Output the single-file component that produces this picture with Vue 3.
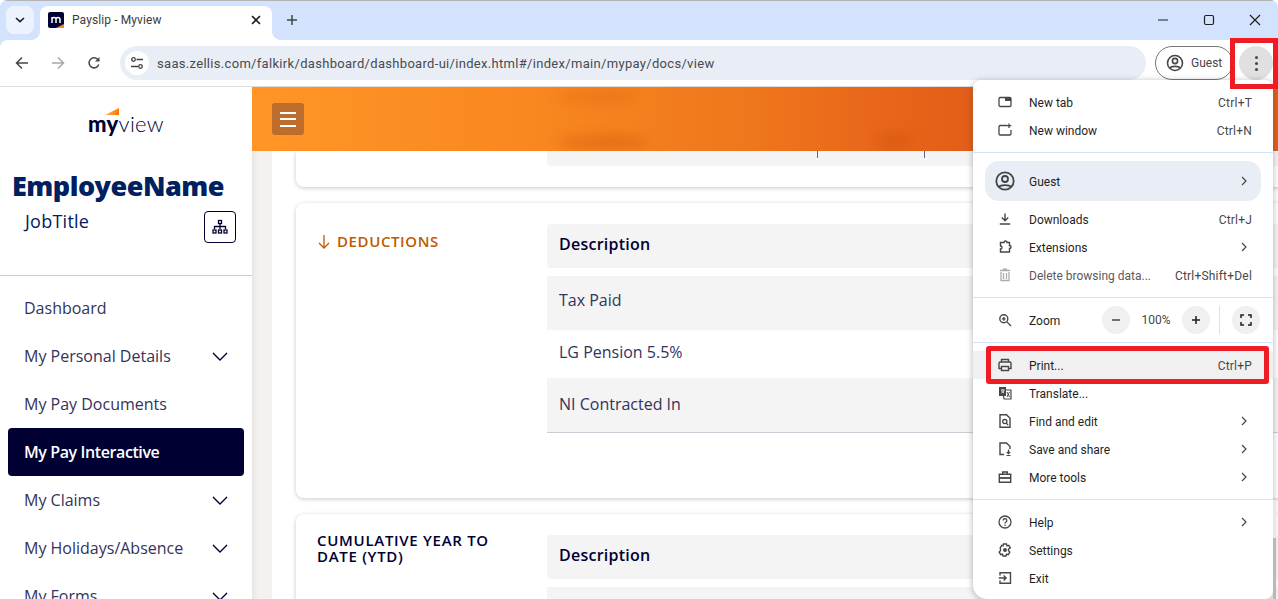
<script setup>
const nav = [
  { label: 'Dashboard' },
  { label: 'My Personal Details', more: true },
  { label: 'My Pay Documents' },
  { label: 'My Pay Interactive', active: true },
  { label: 'My Claims', more: true },
  { label: 'My Holidays/Absence', more: true },
  { label: 'My Forms', more: true }
]
const icons = {
  tab: '<rect x="2" y="3.500" width="12" height="9" rx="1.200" fill="none" stroke-width="1.300"/><path d="M8 4h6v3H8z" fill="#474747" stroke="none"/>',
  win: '<path d="M10 3.500H3.200A1.200 1.200 0 0 0 2 4.700v7.100A1.200 1.200 0 0 0 3.200 13h9.600a1.200 1.200 0 0 0 1.200-1.200V8" fill="none" stroke-width="1.300"/><path d="M12 1.500v4.500M9.800 3.700h4.500" fill="none" stroke-width="1.300"/>',
  down: '<path d="M8 2.500v7M4.800 6.600 8 9.800l3.200-3.200M2.800 13h10.400" fill="none" stroke-width="1.400"/>',
  ext: '<path d="M5 3.500h2a1.500 1.500 0 0 1 3 0h2.500v3a1.500 1.500 0 0 1 0 3v3.500H3.500V10a1.500 1.500 0 0 0 0-3V3.500z" fill="none" stroke-width="1.400"/>',
  trash: '<path d="M4 5v8.500h8V5M3 3.500h10M6 2.200h4M6.500 6v6M9.500 6v6" fill="none" stroke-width="1.300"/>',
  zoom: '<circle cx="6.800" cy="6.800" r="4" fill="none" stroke-width="1.400"/><path d="m10 10 4 4M4.900 6.800h3.800M6.800 4.900v3.800" fill="none" stroke-width="1.300"/>',
  print: '<path d="M4.500 5V2.500h7V5M4.500 11.500H2V6.300A1.300 1.300 0 0 1 3.300 5h9.400A1.300 1.300 0 0 1 14 6.300v5.200h-2.500" fill="none" stroke-width="1.400"/><path d="M4.500 9.500h7v4h-7z" fill="none" stroke-width="1.400"/>',
  trans: '<path d="M2 2h7v9H2z" fill="#474747" stroke="none"/><path d="M9 5h5v9H7l-.5-3" fill="none" stroke-width="1.200"/><path d="M4 5h3.500M5.700 4v1M4.500 8c1.500-.5 2.300-1.500 2.600-3M4.500 5.500c.4 1.200 1.300 2 2.500 2.400" fill="none" stroke="#fff" stroke-width=".8"/><path d="m10 7 2.500 5M12.500 7 10 12" fill="none" stroke-width="1"/>',
  find: '<path d="M3 1.800h6.500L13 5.300v9H3z" fill="none" stroke-width="1.400"/><circle cx="7.800" cy="8.600" r="2.100" fill="none" stroke-width="1.300"/><path d="m9.300 10.200 1.800 1.800" fill="none" stroke-width="1.300"/>',
  save: '<path d="M7 13.500H3V2h6.500L13 5.500V8" fill="none" stroke-width="1.400"/><path d="M11.500 8.500v4M9.800 11l1.700 1.700 1.700-1.700M9.500 14.500h4" fill="none" stroke-width="1.200"/>',
  tools: '<path d="M2.300 5.300h11.400v8H2.300zM5.700 5V3h4.600v2" fill="none" stroke-width="1.400"/><path d="M2.300 9h11.400" fill="none" stroke-width="1.800"/>',
  help: '<circle cx="8" cy="8" r="6" fill="none" stroke-width="1.300"/><path d="M6.200 6.400a1.800 1.800 0 1 1 2.700 1.600c-.6.400-.9.700-.9 1.400" fill="none" stroke-width="1.300"/><circle cx="8" cy="11.300" r=".8" fill="#474747" stroke="none"/>',
  gear: '<path d="m6.500 2 3 0 .5 1.800 1.800-.5 1.500 2.600L11.500 7.200v1.600l1.300 1.300-1.500 2.600-1.800-.5-.5 1.800h-3l-.5-1.800-1.800.5-1.500-2.600 1.300-1.300V7.200L3.200 5.900l1.500-2.600 1.300.5z" fill="none" stroke-width="1.400"/><circle cx="8" cy="8" r="2" fill="#474747" stroke="none"/>',
  exit: '<path d="M3 5.500V2.800h10.500v10.400H3v-2.700" fill="none" stroke-width="1.400"/><path d="M1.800 8h7.200M6.600 5.500 9.100 8l-2.500 2.500" fill="none" stroke-width="1.400"/>'
}
const groupA = [
  { label: 'New tab', key: 'Ctrl+T', icon: 'tab' },
  { label: 'New window', key: 'Ctrl+N', icon: 'win' }
]
const groupB = [
  { label: 'Downloads', key: 'Ctrl+J', icon: 'down' },
  { label: 'Extensions', arrow: true, icon: 'ext' },
  { label: 'Delete browsing data...', key: 'Ctrl+Shift+Del', icon: 'trash', dim: true }
]
const groupC = [
  { label: 'Print...', key: 'Ctrl+P', icon: 'print', hover: true },
  { label: 'Translate...', icon: 'trans' },
  { label: 'Find and edit', arrow: true, icon: 'find' },
  { label: 'Save and share', arrow: true, icon: 'save' },
  { label: 'More tools', arrow: true, icon: 'tools' }
]
const groupD = [
  { label: 'Help', arrow: true, icon: 'help' },
  { label: 'Settings', icon: 'gear' },
  { label: 'Exit', icon: 'exit' }
]
const groups = { groupA, groupB, groupC, groupD }
const rows = ['Tax Paid', 'LG Pension 5.5%', 'NI Contracted In']
</script>

<template>
  <div class="page">
    <div class="strip">
      <div class="tabsearch">
        <svg width="10" height="6" viewBox="0 0 10 6"><path d="m1 1 4 3.600L9 1" fill="none" stroke="#1f1f1f" stroke-width="1.600"/></svg>
      </div>
      <div class="tab">
        <span class="favicon">
          <svg width="16" height="16" viewBox="0 0 16 16">
            <rect width="16" height="16" rx="2" fill="#000033"/>
            <path d="M16 12v2a2 2 0 0 1-2 2H8z" fill="#ff8a1e"/>
            <path d="M4 11V5M4 7.200c0-2.400 4-2.400 4 0V11M8 7.200c0-2.400 4-2.400 4 0V11" fill="none" stroke="#fff" stroke-width="1.500"/>
          </svg>
        </span>
        <span class="tabtitle">Payslip - Myview</span>
        <svg class="tabclose" width="10" height="10" viewBox="0 0 10 10"><path d="m1 1 8 8M9 1 1 9" stroke="#1f1f1f" stroke-width="1.600"/></svg>
      </div>
      <svg class="newtab" width="12" height="12" viewBox="0 0 12 12"><path d="M6 1v10M1 6h10" stroke="#444" stroke-width="1.500"/></svg>
      <div class="winctl">
        <svg width="12" height="12" viewBox="0 0 12 12"><path d="M1 6h10" stroke="#1f1f1f" stroke-width="1.200"/></svg>
        <svg width="12" height="12" viewBox="0 0 12 12"><rect x="1.500" y="1.500" width="9" height="9" rx="1.500" fill="none" stroke="#1f1f1f" stroke-width="1.200"/></svg>
        <svg width="12" height="12" viewBox="0 0 12 12"><path d="m1 1 10 10M11 1 1 11" stroke="#1f1f1f" stroke-width="1.200"/></svg>
      </div>
    </div>

    <div class="toolbar">
      <div class="navbtns">
        <svg width="14" height="14" viewBox="0 0 14 14"><path d="M13 7H2M7 1.500 1.500 7 7 12.500" fill="none" stroke="#474747" stroke-width="1.500"/></svg>
        <svg width="14" height="14" viewBox="0 0 14 14"><path d="M1 7h11M7 1.500 12.500 7 7 12.500" fill="none" stroke="#a8a8a8" stroke-width="1.500"/></svg>
        <svg width="14" height="14" viewBox="0 0 14 14"><path d="M11.800 8.500A5 5 0 1 1 10.600 3.300L12 4.700" fill="none" stroke="#474747" stroke-width="1.500"/><path d="M12.500 1v4.500H8z" fill="#474747"/></svg>
      </div>
      <div class="omni">
        <span class="siteinfo">
          <svg width="14" height="14" viewBox="0 0 14 14" fill="none" stroke="#444" stroke-width="1.300"><circle cx="3.500" cy="3.500" r="1.800"/><path d="M6.500 3.500H13M1 10.500h7"/><circle cx="10.500" cy="10.500" r="1.800"/></svg>
        </span>
        <span class="url">saas.zellis.com/falkirk/dashboard/dashboard-ui/index.html#/index/main/mypay/docs/view</span>
      </div>
      <div class="guest">
        <svg width="18" height="18" viewBox="0 0 18 18" fill="none" stroke="#474747" stroke-width="1.600"><circle cx="9" cy="9" r="7.500"/><circle cx="9" cy="7" r="2.600"/><path d="M3.800 14c1.500-2.200 8.900-2.200 10.400 0"/></svg>
        <span>Guest</span>
      </div>
      <div class="kebab"><i></i><i></i><i></i></div>
    </div>

    <div class="body">
      <aside class="side">
        <div class="logo">
          <span class="logomark"></span>
          <span class="logotext"><b>my</b>view</span>
        </div>
        <div class="who">
          <div class="empname">EmployeeName</div>
          <div class="jobrow">
            <span class="jobtitle">JobTitle</span>
            <span class="orgbtn">
              <svg width="16" height="16" viewBox="0 0 16 16" fill="none" stroke="#000033" stroke-width="1.300"><rect x="6.500" y="1.500" width="3" height="3"/><path d="M8 4.500v3M2.500 10V7.500h11V10M8 7.500V10"/><rect x="1" y="11" width="3" height="3"/><rect x="6.500" y="11" width="3" height="3"/><rect x="12" y="11" width="3" height="3"/></svg>
            </span>
          </div>
        </div>
        <nav class="nav">
          <div v-for="n in nav" :key="n.label" class="navitem" :class="{ active: n.active }">
            <span>{{ n.label }}</span>
            <svg v-if="n.more" width="16" height="9" viewBox="0 0 16 9"><path d="m1 1 7 7 7-7" fill="none" stroke="#000033" stroke-width="1.400"/></svg>
          </div>
        </nav>
      </aside>

      <main class="main">
        <header class="topbar">
          <span class="burger"><i></i><i></i><i></i></span>
          <span class="blur b1"></span>
          <span class="blur b2"></span>
          <span class="blur b3"></span>
        </header>
        <div class="scroll">
          <section class="card first">
            <div class="partial">
              <span class="tick t1"></span>
              <span class="tick t2"></span>
            </div>
          </section>
          <section class="card second">
            <h3 class="deduct">
              <svg width="14" height="15" viewBox="0 0 14 15"><path d="M7 1v13M2 9l5 5 5-5" fill="none" stroke="#bf5a00" stroke-width="1.300"/></svg>
              DEDUCTIONS
            </h3>
            <div class="table">
              <div class="thead">Description</div>
              <div class="tbody">
                <div v-for="r in rows" :key="r" class="trow">{{ r }}</div>
              </div>
            </div>
          </section>
          <section class="card third">
            <h3 class="ytd">CUMULATIVE YEAR TO DATE (YTD)</h3>
            <div class="table">
              <div class="thead">Description</div>
              <div class="tbody"><div class="trow"></div></div>
            </div>
          </section>
        </div>
      </main>
    </div>

    <div class="menu">
      <div class="mgroup">
        <div v-for="m in groups.groupA" :key="m.label" class="mitem">
          <svg class="micon" width="16" height="16" viewBox="0 0 16 16" stroke="#474747" v-html="icons[m.icon]"></svg>
          <span class="mlabel">{{ m.label }}</span>
          <span class="mkey">{{ m.key }}</span>
        </div>
      </div>
      <div class="mgroup withpill">
        <div class="pill">
          <svg width="20" height="20" viewBox="0 0 20 20" fill="none" stroke="#444" stroke-width="1.800"><circle cx="10" cy="10" r="8.700"/><circle cx="10" cy="8" r="3"/><path d="M4 16c1.700-2.600 10.300-2.600 12 0"/></svg>
          <span class="mlabel">Guest</span>
          <svg class="marrow" width="6" height="10" viewBox="0 0 6 10"><path d="m1 1 4 4-4 4" fill="none" stroke="#474747" stroke-width="1.200"/></svg>
        </div>
        <div v-for="m in groups.groupB" :key="m.label" class="mitem" :class="{ dim: m.dim }">
          <svg class="micon" width="16" height="16" viewBox="0 0 16 16" stroke="#474747" v-html="icons[m.icon]"></svg>
          <span class="mlabel">{{ m.label }}</span>
          <span v-if="m.key" class="mkey">{{ m.key }}</span>
          <svg v-if="m.arrow" class="marrow" width="6" height="10" viewBox="0 0 6 10"><path d="m1 1 4 4-4 4" fill="none" stroke="#474747" stroke-width="1.200"/></svg>
        </div>
      </div>
      <div class="mgroup zoomrow">
        <svg class="micon" width="16" height="16" viewBox="0 0 16 16" stroke="#474747" v-html="icons.zoom"></svg>
        <span class="mlabel">Zoom</span>
        <span class="zbtn"><svg width="10" height="10" viewBox="0 0 10 10"><path d="M1 5h8" stroke="#474747" stroke-width="1.500"/></svg></span>
        <span class="zval">100%</span>
        <span class="zbtn"><svg width="10" height="10" viewBox="0 0 10 10"><path d="M1 5h8M5 1v8" stroke="#1f1f1f" stroke-width="1.500"/></svg></span>
        <span class="zsep"></span>
        <span class="zbtn"><svg width="12" height="12" viewBox="0 0 12 12"><path d="M1 4V1h3M8 1h3v3M11 8v3H8M4 11H1V8" fill="none" stroke="#1f1f1f" stroke-width="1.500"/></svg></span>
      </div>
      <div class="mgroup print">
        <div v-for="m in groups.groupC" :key="m.label" class="mitem" :class="{ hover: m.hover }">
          <svg class="micon" width="16" height="16" viewBox="0 0 16 16" stroke="#474747" v-html="icons[m.icon]"></svg>
          <span class="mlabel">{{ m.label }}</span>
          <span v-if="m.key" class="mkey">{{ m.key }}</span>
          <svg v-if="m.arrow" class="marrow" width="6" height="10" viewBox="0 0 6 10"><path d="m1 1 4 4-4 4" fill="none" stroke="#474747" stroke-width="1.200"/></svg>
        </div>
      </div>
      <div class="mgroup last">
        <div v-for="m in groups.groupD" :key="m.label" class="mitem">
          <svg class="micon" width="16" height="16" viewBox="0 0 16 16" stroke="#474747" v-html="icons[m.icon]"></svg>
          <span class="mlabel">{{ m.label }}</span>
          <svg v-if="m.arrow" class="marrow" width="6" height="10" viewBox="0 0 6 10"><path d="m1 1 4 4-4 4" fill="none" stroke="#474747" stroke-width="1.200"/></svg>
        </div>
      </div>
    </div>

    <div class="scrolltrack"><span></span></div>
    <div class="redbox kebabbox"></div>
    <div class="redbox printbox"></div>
  </div>
</template>

<style>
html, body { margin: 0; overflow: hidden; background: #fff; }
</style>

<style scoped>
.page {
  position: relative;
  width: 1278px;
  height: 599px;
  overflow: hidden;
  display: flex;
  flex-direction: column;
  font-family: "Open Sans", "Noto Sans", sans-serif;
  background: #d3e3fd;
  border-radius: 8px 8px 0 0;
}
.strip {
  height: 39px;
  flex: none;
  display: flex;
  align-items: flex-end;
  background: #d3e3fd;
  border-top: 1px solid #b4b4b4;
  padding-left: 6px;
  font-family: Roboto, sans-serif;
}
.tabsearch {
  width: 28px;
  height: 28px;
  margin-bottom: 6px;
  border-radius: 8px;
  background: #edf3fe;
  display: flex;
  align-items: center;
  justify-content: center;
}
.tab {
  position: relative;
  width: 232px;
  height: 34px;
  margin-left: 6px;
  box-sizing: border-box;
  padding: 0 11px 6px 8px;
  display: flex;
  align-items: center;
  background: #fff;
  border-radius: 8px 8px 0 0;
}
.tab::before,
.tab::after {
  content: "";
  position: absolute;
  bottom: 0;
  width: 8px;
  height: 8px;
}
.tab::before { left: -8px; background: radial-gradient(circle at 0 0, transparent 7.500px, #fff 8px); }
.tab::after { right: -8px; background: radial-gradient(circle at 100% 0, transparent 7.500px, #fff 8px); }
.favicon { width: 16px; height: 16px; display: block; line-height: 0; }
.tabtitle { margin-left: 8px; font-size: 12px; color: #3c3c3c; flex: 1; letter-spacing: .1px; }
.newtab { margin: 0 0 14px 14px; }
.winctl {
  margin-left: auto;
  margin-bottom: 14px;
  display: flex;
  gap: 34px;
  padding-right: 17px;
}
.toolbar {
  height: 46px;
  flex: none;
  display: flex;
  align-items: center;
  background: #fff;
  border-bottom: 1px solid #dcdcdc;
  border-radius: 8px 8px 0 0;
  padding: 0 5px 0 15px;
  font-family: Roboto, sans-serif;
}
.navbtns { display: flex; gap: 22px; width: 105px; flex: none; }
.omni {
  width: 1026px;
  height: 34px;
  flex: none;
  border-radius: 17px;
  background: #e9eef6;
  display: flex;
  align-items: center;
  padding-left: 5px;
  box-sizing: border-box;
}
.siteinfo {
  width: 24px;
  height: 24px;
  border-radius: 50%;
  background: #fff;
  display: flex;
  align-items: center;
  justify-content: center;
}
.url { margin-left: 8px; font-size: 13px; color: #474a4f; white-space: nowrap; letter-spacing: .31px; }
.guest {
  margin-left: 9px;
  width: 78px;
  height: 34px;
  flex: none;
  box-sizing: border-box;
  border: 1px solid #747775;
  border-radius: 17px;
  display: flex;
  align-items: center;
  gap: 7px;
  padding-left: 10px;
  font-size: 12px;
  color: #474747;
}
.kebab {
  margin-left: 6px;
  width: 34px;
  height: 34px;
  flex: none;
  border-radius: 50%;
  background: #e0e0e0;
  display: flex;
  flex-direction: column;
  align-items: center;
  justify-content: center;
  gap: 3px;
}
.kebab i { width: 3px; height: 3px; border-radius: 50%; background: #474747; display: block; }
.body { flex: 1; display: flex; min-height: 0; }
.side { width: 252px; flex: none; background: #fff; overflow: hidden; }
.logo {
  position: relative;
  height: 85px;
  display: flex;
  justify-content: center;
  align-items: flex-start;
  padding-top: 23px;
  box-sizing: border-box;
}
.logomark {
  position: absolute;
  left: 105px;
  top: 21px;
  width: 14px;
  height: 7px;
  background: linear-gradient(90deg, #ffb060, #ff7a00);
  clip-path: polygon(0 100%, 100% 0, 100% 100%);
}
.logotext {
  font-family: Lato, sans-serif;
  font-size: 22px;
  line-height: 28px;
  font-weight: 300;
  color: #000033;
  letter-spacing: .3px;
}
.logotext b { font-weight: 900; }
.who { height: 103px; border-bottom: 1px solid #ccccd6; padding-left: 12px; }
.empname {
  font-size: 27px;
  font-weight: 800;
  line-height: 28px;
  color: #002060;
  letter-spacing: -.5px;
  font-family: "Open Sans", sans-serif;
}
.jobrow { display: flex; justify-content: space-between; align-items: flex-start; padding: 9px 16px 0 13px; }
.jobtitle { font-size: 18px; line-height: 24px; color: #002060; letter-spacing: .25px; }
.orgbtn {
  width: 32px;
  height: 32px;
  box-sizing: border-box;
  border: 1px solid #000033;
  border-radius: 4px;
  display: flex;
  align-items: center;
  justify-content: center;
  margin-top: 2px;
}
.nav { padding: 8px 8px 0; }
.navitem {
  height: 48px;
  display: flex;
  align-items: center;
  justify-content: space-between;
  padding: 0 16px;
  font-size: 16px;
  color: #33335c;
  border-radius: 4px;
}
.navitem.active { background: #000033; color: #fff; font-weight: 600; letter-spacing: -.4px; }
.main {
  flex: 1;
  min-width: 0;
  position: relative;
  background: linear-gradient(90deg, #e8e5e2, #f4f2f0 6px);
  display: flex;
  flex-direction: column;
}
.topbar {
  position: relative;
  height: 64px;
  flex: none;
  background: linear-gradient(90deg, #ff9627 0%, #f8871f 28%, #ee751c 50%, #e8651a 62%, #e25e18 70%, #e25e18 100%);
  overflow: hidden;
}
.burger {
  position: absolute;
  left: 20px;
  top: 16px;
  width: 32px;
  height: 32px;
  border-radius: 3px;
  background: #bd6c2b;
  display: flex;
  flex-direction: column;
  align-items: center;
  justify-content: center;
  gap: 4.500px;
}
.burger i { width: 16px; height: 2px; background: #fff; display: block; }
.blur { position: absolute; border-radius: 50%; background: rgba(200, 80, 10, .35); filter: blur(6px); }
.b1 { left: 306px; top: 48px; width: 90px; height: 14px; }
.b2 { left: 623px; top: 46px; width: 40px; height: 16px; }
.b3 { left: 306px; top: 3px; width: 80px; height: 14px; background: rgba(200, 80, 10, .18); }
.scroll {
  flex: 1;
  min-height: 0;
  margin-left: 20px;
  padding: 0 24px;
  background: #fff;
  overflow: hidden;
  display: flex;
  flex-direction: column;
  gap: 16px;
}
.card {
  flex: none;
  background: #fff;
  border-radius: 8px;
  box-shadow: 0 1px 4px rgba(0, 0, 51, .22);
  box-sizing: border-box;
  display: flex;
  padding-left: 21px;
  width: 1000px;
}
.card.first { height: 36px; border-radius: 0 0 8px 8px; padding-left: 251px; }
.partial {
  position: relative;
  width: 800px;
  height: 15px;
  background: #f4f4f4;
  border-radius: 0 0 4px 4px;
}
.tick { position: absolute; top: 0; width: 1px; height: 7px; background: #66668a; }
.t1 { left: 270px; }
.t2 { left: 377px; }
.card.second { height: 295px; padding-top: 21px; }
.card.third { height: 200px; padding-top: 21px; }
.deduct {
  width: 230px;
  flex: none;
  margin: 7px 0 0;
  display: flex;
  align-items: center;
  gap: 6px;
  height: 20px;
  font-size: 15px;
  font-weight: 600;
  letter-spacing: .6px;
  color: #bf5a00;
  font-family: "Open Sans", sans-serif;
}
.ytd {
  width: 190px;
  margin: -3px 40px 0 0;
  flex: none;
  font-size: 15px;
  line-height: 16px;
  font-weight: 600;
  letter-spacing: .7px;
  color: #000033;
  font-family: "Open Sans", sans-serif;
}
.table { width: 800px; flex: none; }
.thead {
  height: 44px;
  box-sizing: border-box;
  display: flex;
  align-items: center;
  padding: 0 0 5px 12px;
  background: #f4f4f4;
  border-radius: 4px;
  font-size: 16px;
  font-weight: 600;
  letter-spacing: .25px;
  color: #000033;
}
.tbody { margin-top: 8px; border-bottom: 1px solid #ccccd6; }
.third .tbody { border-bottom: 0; }
.trow {
  box-sizing: border-box;
  padding: 0 12px 4px;
  display: flex;
  align-items: center;
  height: 48px;
  font-size: 16px;
  color: #33335c;
}
.trow:nth-child(odd) { background: #f4f4f4; height: 54px; padding-bottom: 6px; }
.trow:nth-child(3) { padding-bottom: 2px; }
.third .trow { height: 60px; }
.menu {
  position: absolute;
  left: 973px;
  top: 80px;
  width: 300px;
  height: 519px;
  background: #fff;
  border-radius: 8px 8px 8px 14px;
  box-shadow: 0 1px 6px rgba(60, 64, 67, .4);
  font-family: Roboto, sans-serif;
  font-size: 12px;
  color: #1f1f1f;
  box-sizing: border-box;
  padding-top: 8px;
}
.mgroup { border-bottom: 1px solid #d3e3fd; padding: 0 0 8px; }
.mgroup.print { padding-top: 8px; }
.mgroup.last { border-bottom: 0; padding-top: 8px; }
.mgroup.withpill { padding-top: 8px; }
.mitem {
  height: 28px;
  display: flex;
  align-items: center;
  padding: 0 21px 0 24px;
}
.mitem.hover { background: #f0f0f0; }
.mitem.dim { color: #5a5a5a; }
.mitem.dim .micon { opacity: .45; }
.micon { flex: none; margin-right: 16px; }
.mlabel { flex: 1; white-space: nowrap; margin-top: 2px; }
.mkey { color: #474747; white-space: nowrap; letter-spacing: .2px; margin-top: 2px; }
.marrow { margin-right: 5px; flex: none; }
.pill {
  margin: 0 12px 4px;
  height: 40px;
  border-radius: 14px;
  background: #e8edf6;
  display: flex;
  align-items: center;
  padding: 0 8px 0 10px;
  gap: 14px;
}
.pill .marrow { margin-right: 6px; }
.zoomrow {
  height: 45px;
  box-sizing: border-box;
  display: flex;
  align-items: center;
  padding: 0 13px 0 24px;
}
.zoomrow .mlabel { flex: 1; }
.zbtn {
  width: 28px;
  height: 28px;
  border-radius: 50%;
  background: #f0f0f0;
  display: flex;
  align-items: center;
  justify-content: center;
  flex: none;
}
.zval { width: 52px; text-align: center; font-size: 12px; color: #474747; flex: none; }
.zsep { width: 1px; height: 28px; background: #d3e3fd; margin: 0 12px 0 9px; flex: none; }
.scrolltrack {
  position: absolute;
  left: 1273px;
  top: 500px;
  bottom: 0;
  width: 3px;
  background: #e8e8e8;
  display: flex;
  flex-direction: column;
  justify-content: flex-end;
}
.scrolltrack span { display: block; height: 61px; background: #b9b9b9; }
.redbox {
  position: absolute;
  box-sizing: border-box;
  border: 5px solid #ee1c25;
  pointer-events: none;
}
.kebabbox { left: 1230px; top: 38px; width: 48px; height: 51px; }
.printbox { left: 986px; top: 346px; width: 283px; height: 38px; border-radius: 3px; }
</style>
